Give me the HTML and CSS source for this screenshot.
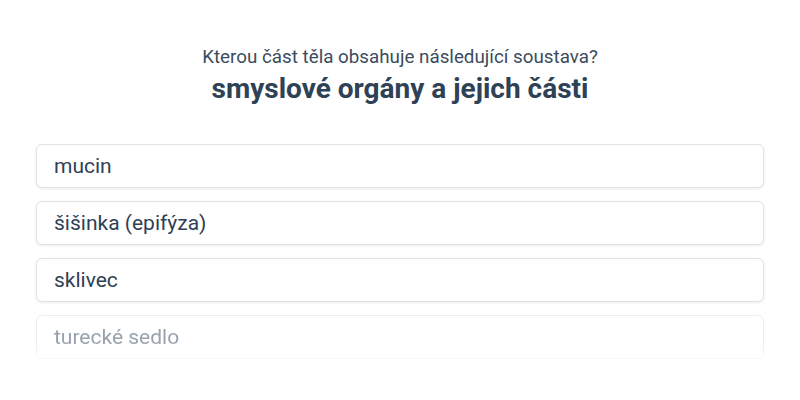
FILE: index.html
```html
<!DOCTYPE html>
<html>
<head>
    <title>Kvíz</title>
    <link rel="stylesheet" href="styles.css">
</head>
<body>
    <div class="quiz">
        <div class="quiz-header">
            <div class="question">Kterou část těla obsahuje následující soustava?</div>
            <div class="topic">smyslové orgány a jejich části</div>
        </div>

        <div class="answers">
            <div class="answer">mucin</div>
            <div class="answer">šišinka (epifýza)</div>
            <div class="answer">sklivec</div>
            <div class="answer faded">turecké sedlo</div>
        </div>
    </div>
</body>
</html>
```

FILE: styles.css
```css
body {
    margin: 0;
    background: #ffffff;
    font-family: Roboto, "Liberation Sans", sans-serif;
    color: #2e4155;
}

.quiz {
    padding: 45px 36px 0 36px;
}

.quiz-header {
    text-align: center;
    margin-bottom: 35px;
}

.question {
    font-size: 18.8px;
    line-height: 24px;
    color: #3b4c5e;
}

.topic {
    font-size: 28px;
    line-height: 40px;
    font-weight: 700;
    color: #2e4155;
}

.answers {
    display: flex;
    flex-direction: column;
    gap: 13px;
    padding-bottom: 4px;
}

.answer {
    height: 44px;
    box-sizing: border-box;
    display: flex;
    align-items: center;
    padding: 0 17px;
    font-size: 21px;
    background: #ffffff;
    border: 1px solid #e2e2e2;
    border-radius: 6px;
    box-shadow: 0 1px 3px rgba(0, 0, 0, 0.08);
}

.answer.faded {
    color: #98a2ad;
    border-color: #ececec;
    -webkit-mask-image: linear-gradient(to bottom, #000 60%, rgba(0, 0, 0, 0.35) 100%);
    mask-image: linear-gradient(to bottom, #000 60%, rgba(0, 0, 0, 0.35) 100%);
}
```
